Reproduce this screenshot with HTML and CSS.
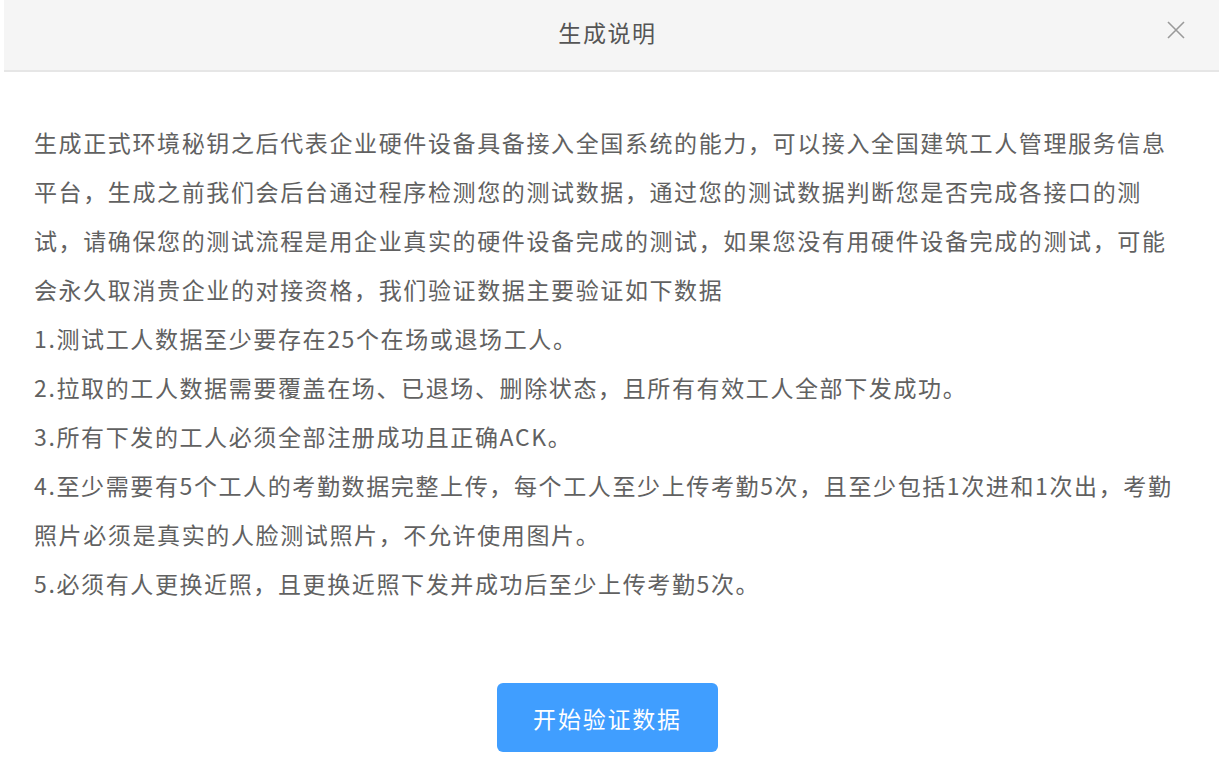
FILE: index.html
```html
<!DOCTYPE html>
<html lang="zh-CN">
<head>
  <meta charset="UTF-8">
  <meta name="viewport" content="width=device-width, initial-scale=1.0">
  <title>生成说明</title>
  <link rel="stylesheet" href="styles.css">
</head>
<body>
  <div class="dialog">
    <!-- Header -->
    <div class="dialog-header">
      <span class="dialog-title">生成说明</span>
      <button class="close" aria-label="关闭">
        <svg width="18" height="18" viewBox="0 0 18 18">
          <path d="M1 1 L17 17 M17 1 L1 17" stroke="#9a9a9a" stroke-width="1.6" fill="none" />
        </svg>
      </button>
    </div>

    <!-- Body -->
    <div class="dialog-body">
      <p>生成正式环境秘钥之后代表企业硬件设备具备接入全国系统的能力，可以接入全国建筑工人管理服务信息平台，生成之前我们会后台通过程序检测您的测试数据，通过您的测试数据判断您是否完成各接口的测试，请确保您的测试流程是用企业真实的硬件设备完成的测试，如果您没有用硬件设备完成的测试，可能会永久取消贵企业的对接资格，我们验证数据主要验证如下数据</p>
      <p>1.测试工人数据至少要存在25个在场或退场工人。</p>
      <p>2.拉取的工人数据需要覆盖在场、已退场、删除状态，且所有有效工人全部下发成功。</p>
      <p>3.所有下发的工人必须全部注册成功且正确ACK。</p>
      <p>4.至少需要有5个工人的考勤数据完整上传，每个工人至少上传考勤5次，且至少包括1次进和1次出，考勤照片必须是真实的人脸测试照片，不允许使用图片。</p>
      <p>5.必须有人更换近照，且更换近照下发并成功后至少上传考勤5次。</p>
    </div>

    <div class="dialog-footer">
      <button class="verify">开始验证数据</button>
    </div>
  </div>
</body>
</html>
```

FILE: styles.css
```css
body {
  margin: 0;
  background-color: #fff;
  font-family: "Noto Sans CJK SC", "Liberation Sans", sans-serif;
  color: #616161;
}

.dialog {
  padding-left: 4px;
}

.dialog-header {
  position: relative;
  height: 70px;
  background-color: #f5f5f5;
  border-bottom: 2px solid #e6e6e6;
  display: flex;
  align-items: center;
  justify-content: center;
}

.dialog-title {
  font-size: 23px;
  letter-spacing: 1.6px;
  color: #555;
  margin-top: -6px;
  margin-left: -8px;
}

.close {
  position: absolute;
  right: 34px;
  top: 21px;
  padding: 0;
  border: none;
  background: none;
  cursor: pointer;
  line-height: 0;
}

.dialog-body {
  padding: 46px 35px 0 30px;
  font-size: 23px;
  letter-spacing: 1.62px;
  line-height: 49px;
}

.dialog-body p {
  margin: 0;
}

.dialog-footer {
  display: flex;
  justify-content: center;
  padding-top: 75px;
  padding-right: 8px;
}

.verify {
  width: 221px;
  height: 69px;
  border: none;
  border-radius: 6px;
  background-color: #409eff;
  color: #fff;
  font-family: inherit;
  font-size: 23px;
  letter-spacing: 1.8px;
  cursor: pointer;
}
```
